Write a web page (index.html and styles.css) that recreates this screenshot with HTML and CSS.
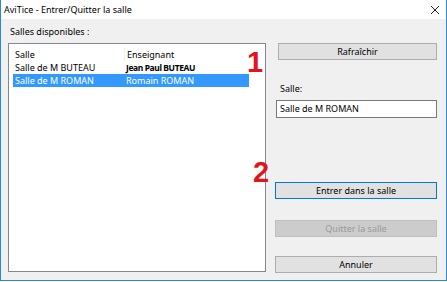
FILE: index.html
```html
<!DOCTYPE html>
<html lang="fr">
<head>
  <meta charset="UTF-8">
  <title>AviTice - Entrer/Quitter la salle</title>
  <link rel="stylesheet" href="styles.css">
</head>
<body>
  <div class="window">
    <div class="title-bar">
      <span class="title">AviTice - Entrer/Quitter la salle</span>
      <svg class="close" width="10" height="10" viewBox="0 0 10 10">
        <path d="M1 1 L9 9 M9 1 L1 9" stroke="#222" stroke-width="1"/>
      </svg>
    </div>

    <div class="content">
      <div class="left-col">
        <div class="label">Salles disponibles :</div>
        <div class="listbox">
          <div class="row header">
            <span class="cell col-salle">Salle</span>
            <span class="cell col-prof">Enseignant</span>
          </div>
          <div class="row">
            <span class="cell col-salle">Salle de M BUTEAU</span>
            <span class="cell col-prof bold">Jean Paul BUTEAU</span>
          </div>
          <div class="row selected">
            <span class="cell col-salle">Salle de M ROMAN</span>
            <span class="cell col-prof">Romain ROMAN</span>
          </div>
        </div>
      </div>

      <div class="right-col">
        <button class="btn btn-refresh">Rafraîchir</button>
        <div class="label field-label">Salle:</div>
        <div class="textbox">Salle de M ROMAN</div>
        <button class="btn btn-default btn-enter">Entrer dans la salle</button>
        <button class="btn btn-disabled btn-leave" disabled>Quitter la salle</button>
        <button class="btn btn-cancel">Annuler</button>
      </div>
    </div>

    <span class="marker marker-1">1</span>
    <span class="marker marker-2">2</span>
  </div>
</body>
</html>
```

FILE: styles.css
```css
body {
  margin: 0;
  padding: 0;
  background: #ffffff;
  font-family: "Noto Sans", "Liberation Sans", sans-serif;
  font-size: 9px;
  color: #000000;
}

.window {
  position: relative;
  box-sizing: border-box;
  width: 447px;
  height: 281px;
  border: 1px solid #2b88d8;
  border-top: none;
  background: #f0f0f0;
}

.title-bar {
  display: flex;
  align-items: center;
  justify-content: space-between;
  height: 19px;
  padding: 0 6px 0 3px;
  background: #ffffff;
}

.close {
  margin-top: 1px;
}

.content {
  display: flex;
  padding: 7px 8px 0 7px;
  gap: 9px;
}

.left-col {
  display: flex;
  flex-direction: column;
  width: 258px;
}

.label {
  height: 12px;
  line-height: 12px;
  padding-left: 2px;
}

.listbox {
  box-sizing: border-box;
  margin-top: 5px;
  height: 229px;
  padding: 4px 16px 0 4px;
  background: #ffffff;
  border: 1px solid #828790;
}

.row {
  display: flex;
  height: 13px;
  line-height: 13px;
}

.cell {
  padding-left: 2px;
  white-space: nowrap;
}

.col-salle {
  width: 109px;
}

.header .col-salle {
  border-right: 1px solid #f0f0f0;
}

.bold {
  font-weight: bold;
  font-size: 8.5px;
  letter-spacing: -0.4px;
}

.selected {
  background: #3399ff;
  color: #ffffff;
}

.right-col {
  display: flex;
  flex-direction: column;
  width: 162px;
}

.btn {
  box-sizing: border-box;
  height: 17px;
  padding: 0;
  font-family: inherit;
  font-size: 9px;
  color: #000000;
  background: #e1e1e1;
  border: 1px solid #adadad;
}

.btn-refresh {
  margin-top: 17px;
  margin-left: 3px;
  width: 159px;
}

.field-label {
  margin-top: 23px;
  margin-left: 3px;
}

.textbox {
  box-sizing: border-box;
  margin-top: 5px;
  margin-left: 1px;
  height: 18px;
  line-height: 16px;
  padding-left: 3px;
  background: #ffffff;
  border: 1px solid #7a7a7a;
}

.btn-enter {
  margin-top: 64px;
}

.btn-default {
  border: 1px solid #0078d7;
}

.btn-leave {
  margin-top: 21px;
}

.btn-disabled {
  background: #cccccc;
  border-color: #bfbfbf;
  color: #9a9a9a;
}

.btn-cancel {
  margin-top: 19px;
}

.marker {
  position: absolute;
  color: #e3151a;
  font-family: "Liberation Sans", sans-serif;
  font-weight: bold;
  font-size: 29px;
  line-height: 1;
}

.marker-1 {
  left: 246px;
  top: 48px;
}

.marker-2 {
  left: 252px;
  top: 158px;
}
```
